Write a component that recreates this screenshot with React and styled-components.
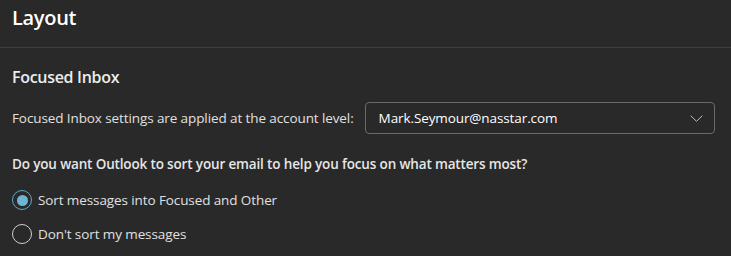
import React, { useState } from "react";
import styled, { createGlobalStyle } from "styled-components";

const GlobalStyle = createGlobalStyle`
  html, body {
    margin: 0;
    padding: 0;
    background: #292929;
  }
  body {
    font-family: "Open Sans", "Noto Sans", sans-serif;
    color: #e6e6e6;
  }
`;

const options = [
  { id: "focused", label: "Sort messages into Focused and Other" },
  { id: "none", label: "Don't sort my messages" },
];

function Chevron() {
  return (
    <svg width="13" height="7" viewBox="0 0 13 7" fill="none">
      <path d="M0.7 0.7l5.8 5.6 5.8-5.6" stroke="#bdbdbd" strokeWidth="1" />
    </svg>
  );
}

export default function App() {
  const [sort, setSort] = useState("focused");

  return (
    <Page>
      <GlobalStyle />
      <Header>
        <Title>Layout</Title>
      </Header>
      <Section>
        <SectionTitle>Focused Inbox</SectionTitle>
        <AccountRow>
          <Label>Focused Inbox settings are applied at the account level:</Label>
          <Select>
            <span>Mark.Seymour@nasstar.com</span>
            <Chevron />
          </Select>
        </AccountRow>
        <Question>
          Do you want Outlook to sort your email to help you focus on what
          matters most?
        </Question>
        <RadioList>
          {options.map((o) => (
            <RadioRow key={o.id} onClick={() => setSort(o.id)}>
              <RadioCircle checked={sort === o.id} />
              <span>{o.label}</span>
            </RadioRow>
          ))}
        </RadioList>
      </Section>
    </Page>
  );
}

const Page = styled.div`
  width: 731px;
  height: 256px;
  overflow: hidden;
  background: #292929;
`;

const Header = styled.div`
  height: 47px;
  padding: 0 12px;
  border-bottom: 1px solid #3f3f3f;
  display: flex;
  align-items: center;
`;

const Title = styled.h1`
  margin: 0;
  margin-top: -12px;
  font-size: 20px;
  font-weight: 600;
  letter-spacing: -0.3px;
  color: #ffffff;
`;

const Section = styled.div`
  padding: 18px 12px 0;
`;

const SectionTitle = styled.h2`
  margin: 0;
  font-size: 16px;
  font-weight: 600;
  letter-spacing: -0.3px;
  color: #ececec;
  line-height: 22px;
`;

const AccountRow = styled.div`
  display: flex;
  align-items: center;
  gap: 11px;
  margin-top: 14px;
`;

const Label = styled.span`
  white-space: nowrap;
  font-size: 13.5px;
  letter-spacing: -0.1px;
  color: #e0e0e0;
`;

const Select = styled.div`
  box-sizing: border-box;
  flex: 0 0 350px;
  height: 32px;
  border: 1px solid #6a6a6a;
  border-radius: 4px;
  display: flex;
  align-items: center;
  justify-content: space-between;
  padding: 0 11px 0 13px;
  font-size: 13.5px;
  letter-spacing: -0.1px;
  color: #ffffff;
`;

const Question = styled.p`
  margin: 21px 0 0;
  font-size: 13.5px;
  font-weight: 600;
  letter-spacing: -0.15px;
  color: #e6e6e6;
`;

const RadioList = styled.div`
  display: flex;
  flex-direction: column;
  gap: 14px;
  margin-top: 17px;
`;

const RadioRow = styled.label`
  display: flex;
  align-items: center;
  gap: 6px;
  font-size: 13.5px;
  letter-spacing: -0.1px;
  color: #e0e0e0;
  cursor: pointer;
`;

const RadioCircle = styled.span`
  box-sizing: border-box;
  width: 20px;
  height: 20px;
  border-radius: 50%;
  border: 1px solid ${(p) => (p.checked ? "#5ca9c9" : "#d0d0d0")};
  display: flex;
  align-items: center;
  justify-content: center;
  &::after {
    content: "";
    width: 11px;
    height: 11px;
    border-radius: 50%;
    background: ${(p) => (p.checked ? "#6db5d6" : "transparent")};
  }
`;
